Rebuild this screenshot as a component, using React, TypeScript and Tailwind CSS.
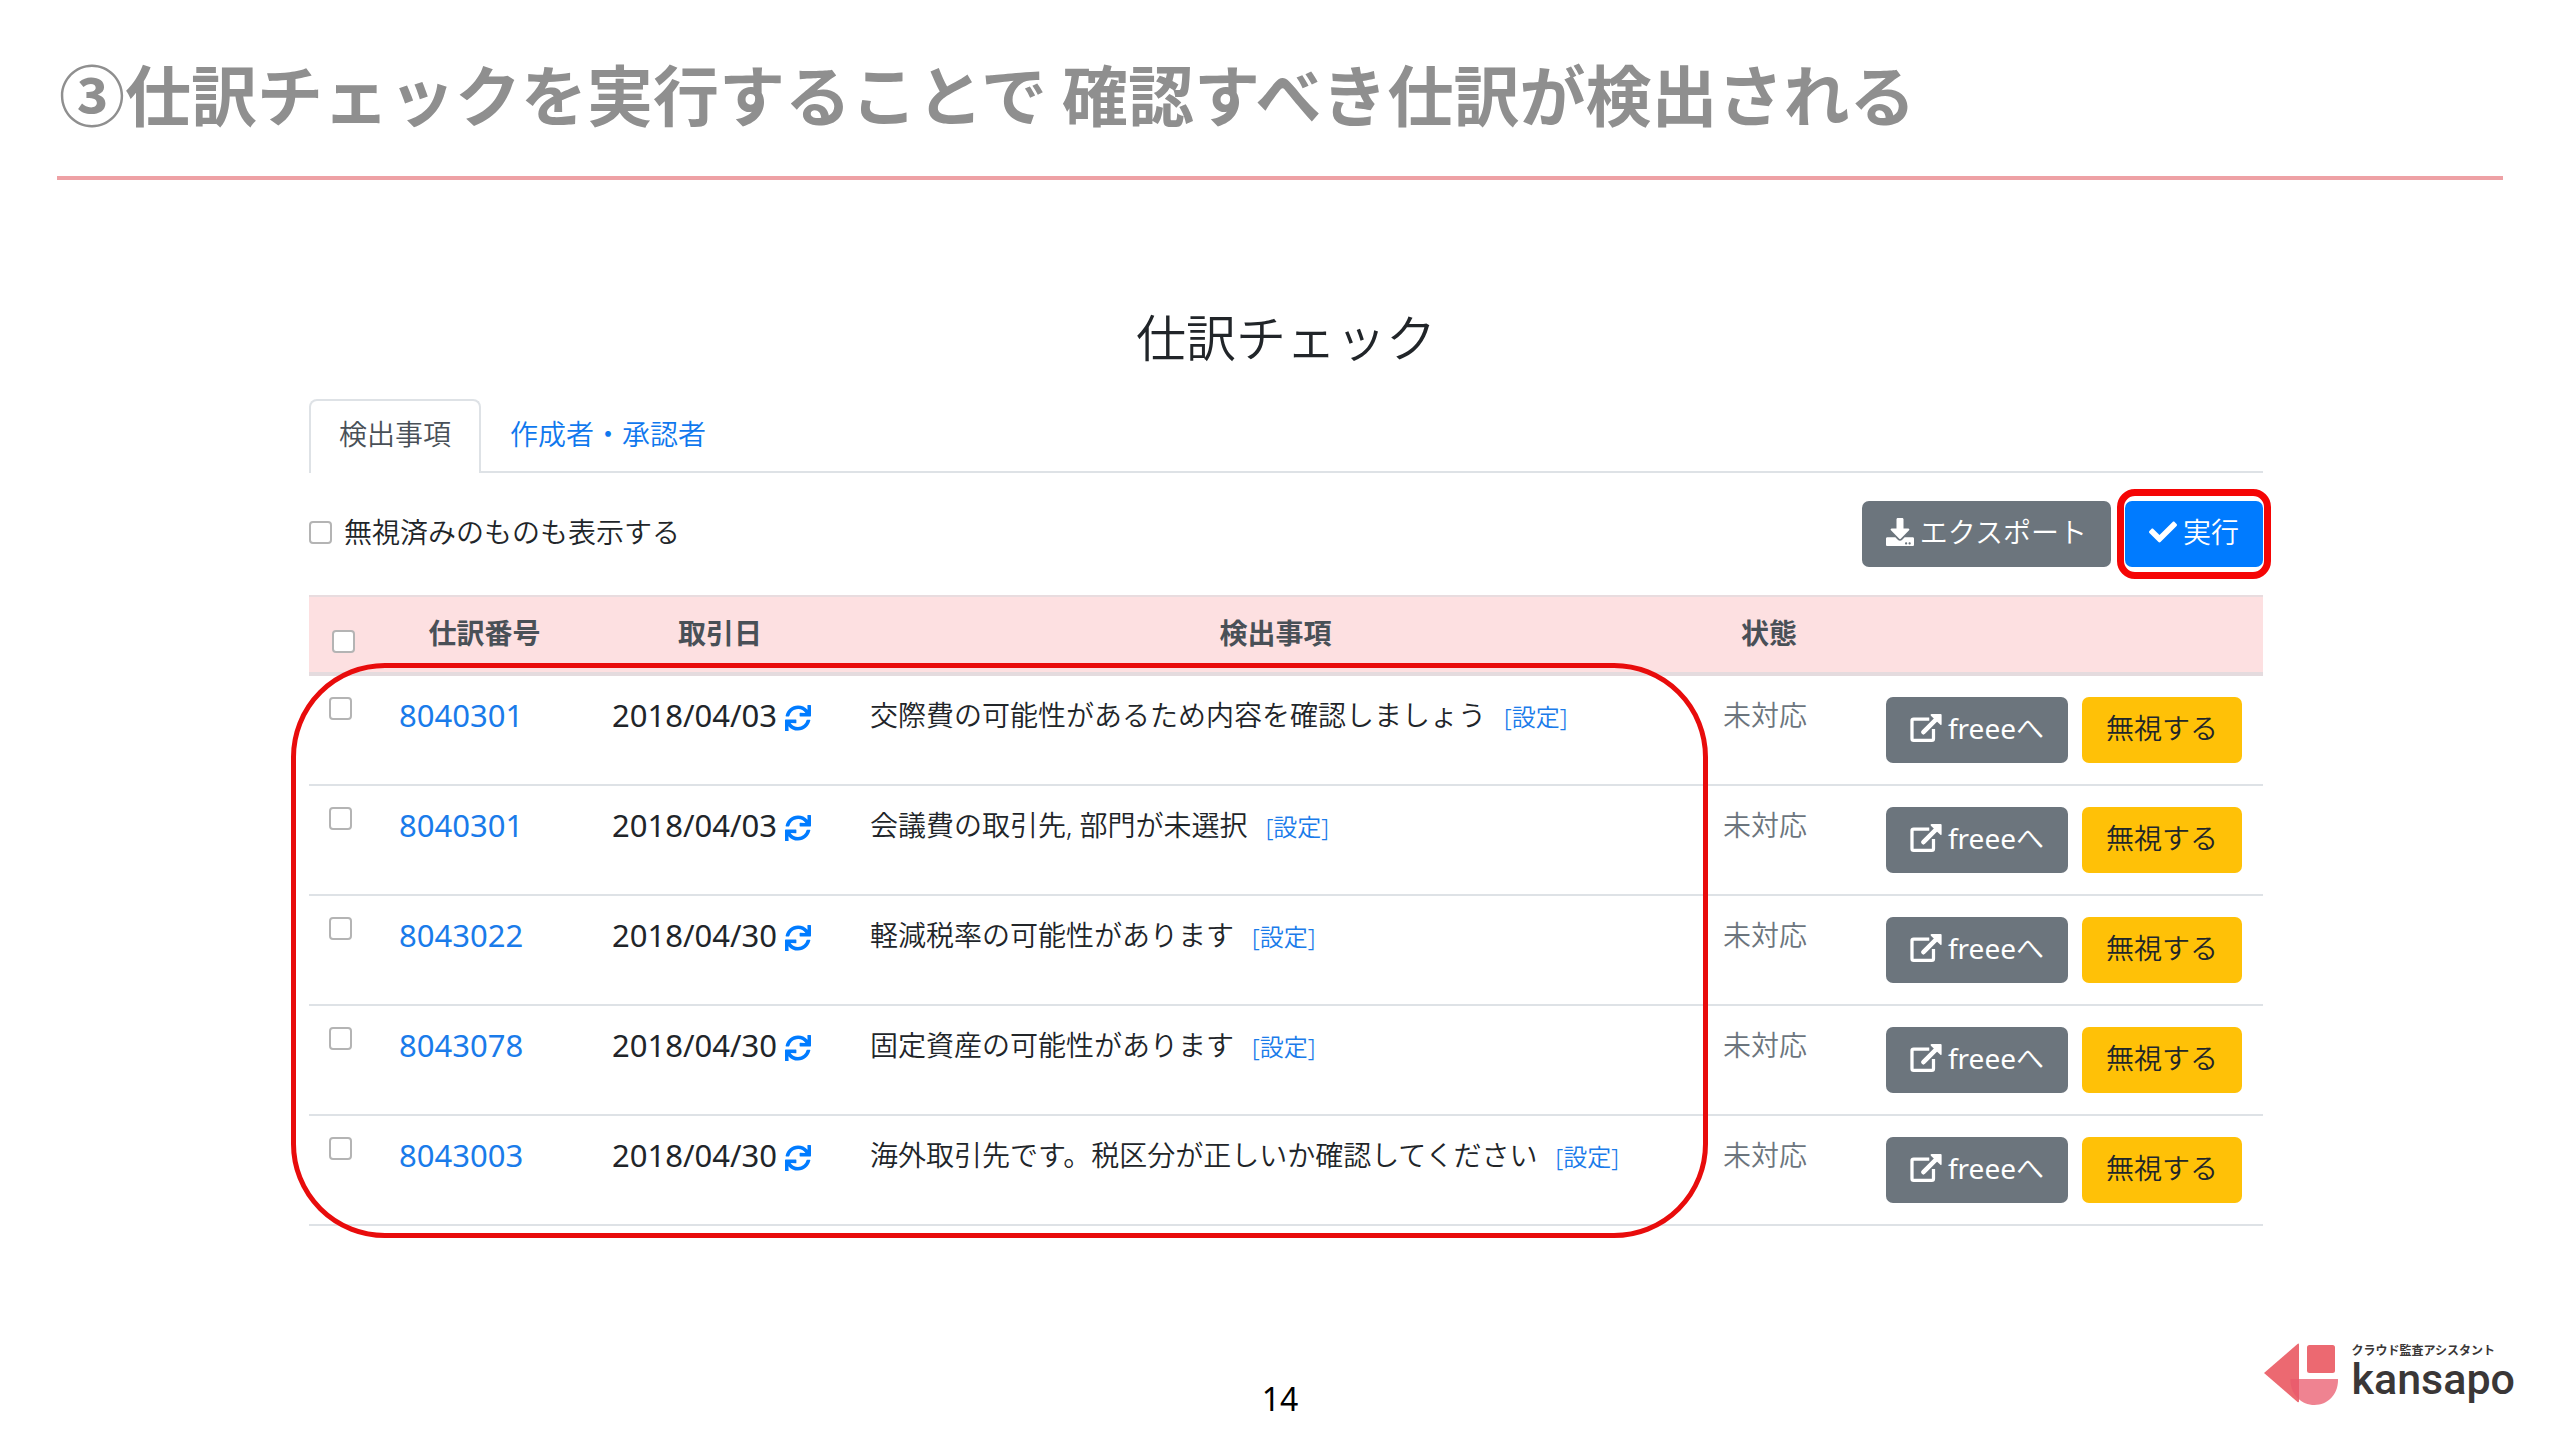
import { useState } from 'react';
import { FaCheck, FaDownload, FaSync } from 'react-icons/fa';

const rows = [
  { no: '8040301', date: '2018/04/03', text: '交際費の可能性があるため内容を確認しましょう' },
  { no: '8040301', date: '2018/04/03', text: '会議費の取引先, 部門が未選択' },
  { no: '8043022', date: '2018/04/30', text: '軽減税率の可能性があります' },
  { no: '8043078', date: '2018/04/30', text: '固定資産の可能性があります' },
  { no: '8043003', date: '2018/04/30', text: '海外取引先です。税区分が正しいか確認してください' },
];

const checkboxClass =
  'block size-[23px] shrink-0 appearance-none rounded-[4px] border-2 border-[#b4b4b4] bg-white checked:bg-[#007bff]';
const buttonClass =
  'inline-flex h-[66px] items-center gap-1.5 whitespace-nowrap rounded-[7px] px-6 pb-1 text-[28px] leading-[42px]';

function ExternalLinkIcon() {
  return (
    <svg className="h-7 w-8" viewBox="0 0 96 86" fill="none" aria-hidden="true">
      <path
        d="M58 16H10a5 5 0 0 0-5 5v55a5 5 0 0 0 5 5h56a5 5 0 0 0 5-5V46"
        stroke="currentColor"
        strokeWidth="10"
      />
      <path d="M40 56 80 16" stroke="currentColor" strokeWidth="14" strokeLinecap="round" />
      <path d="M65 0h28q3 0 3 3v28q0 5-4 2L63 5q-3-5 2-5z" fill="currentColor" />
    </svg>
  );
}

function Logo() {
  return (
    <div className="flex items-start gap-3.5 text-[#3a3737]">
      <svg className="h-[62px] w-[74px]" viewBox="0 0 74 62" aria-hidden="true">
        <path d="M0 30 33.5 1q1.5-1.2 1.5 1v56q0 2-1.5 1z" fill="#ec6971" />
        <rect x="43" y="2" width="28" height="28" rx="2.5" fill="#ec6971" />
        <path d="M26.500 36H74c.5 15-10 26-23.500 26S26 51 26.500 36z" fill="#ea5a6c" fillOpacity="0.75" />
      </svg>
      <div className="flex flex-col">
        <span className="text-[12px] leading-4 font-bold">クラウド監査アシスタント</span>
        <span className="font-['Roboto',sans-serif] text-[43px] leading-10 font-medium">kansapo</span>
      </div>
    </div>
  );
}

export default function App() {
  const [showIgnored, setShowIgnored] = useState(false);
  const [selected, setSelected] = useState<number[]>([]);

  const toggle = (index: number) => {
    setSelected(selected.includes(index) ? selected.filter((i) => i !== index) : [...selected, index]);
  };

  return (
    <div className="flex min-h-screen flex-col bg-white font-['Noto_Sans','Noto_Sans_CJK_JP',sans-serif] text-[28px] leading-[42px] font-[350] text-[#212529]">
      <header className="mx-[57px] border-b-4 border-[#eea1a5] pt-11 pb-9">
        <h1 className="pl-0.5 font-['Noto_Sans_CJK_JP',sans-serif] text-[66px] leading-[96px] font-bold text-[#8f8f8f]">
          ③仕訳チェックを実行することで 確認すべき仕訳が検出される
        </h1>
      </header>

      <main className="grow pt-[121px] pr-[297px] pl-[309px]">
        <h2 className="text-center text-[50px] leading-[74px]">仕訳チェック</h2>

        {/* Tabs */}
        <nav className="mt-6 flex border-b-2 border-[#dee2e6]">
          <a
            href="#findings"
            className="-mb-0.5 rounded-t-lg border-2 border-b-0 border-[#dee2e6] bg-white px-7 pt-3 pb-[18px] text-[#495057]"
          >
            検出事項
          </a>
          <a href="#authors" className="px-[29px] pt-3.5 pb-4 text-[#0f78ee]">
            作成者・承認者
          </a>
        </nav>

        <div className="mt-7 flex items-center justify-between">
          <label className="flex items-center gap-3 pb-1">
            <input
              type="checkbox"
              className={checkboxClass}
              checked={showIgnored}
              onChange={(e) => setShowIgnored(e.target.checked)}
            />
            無視済みのものも表示する
          </label>
          <div className="flex gap-3.5">
            <button className={`${buttonClass} bg-[#6c757d] text-white`}>
              <FaDownload className="size-7" />
              エクスポート
            </button>
            <div className="relative">
              <button className={`${buttonClass} bg-[#007bff] text-white`}>
                <FaCheck className="size-7" />
                実行
              </button>
              <div className="pointer-events-none absolute -inset-x-2 -inset-y-3 rounded-[18px] border-[7px] border-[#f50505]" />
            </div>
          </div>
        </div>

        {/* Findings */}
        <div className="relative mt-7">
          <table className="w-full table-fixed border-separate border-spacing-0">
            <colgroup>
              <col className="w-[69px]" />
              <col className="w-[213px]" />
              <col className="w-[258px]" />
              <col />
              <col className="w-[134px]" />
              <col className="w-[427px]" />
            </colgroup>
            <thead>
              <tr className="bg-[#fde0e1] text-[#495057] [&>th]:border-t-2 [&>th]:border-b-4 [&>th]:border-t-[#e8dcdf] [&>th]:border-b-[#e4dbde] [&>th]:pt-[15px] [&>th]:pb-[18px]">
                <th className="pl-[23px]">
                  <input
                    type="checkbox"
                    aria-label="すべて選択"
                    className={`${checkboxClass} mt-4`}
                    checked={selected.length === rows.length}
                    onChange={(e) => setSelected(e.target.checked ? rows.map((_, i) => i) : [])}
                  />
                </th>
                <th>仕訳番号</th>
                <th>取引日</th>
                <th>検出事項</th>
                <th>状態</th>
                <th />
              </tr>
            </thead>
            <tbody>
              {rows.map((row, index) => (
                <tr key={index} className="align-top [&>td]:border-b-2 [&>td]:border-[#dee2e6]">
                  <td className="pt-[21px] pl-5">
                    <input
                      type="checkbox"
                      aria-label={row.no}
                      className={checkboxClass}
                      checked={selected.includes(index)}
                      onChange={() => toggle(index)}
                    />
                  </td>
                  <td className="pt-[18px] pl-[21px]">
                    <a href={`#${row.no}`} className="text-[31px] font-normal text-[#1a7bea]">
                      {row.no}
                    </a>
                  </td>
                  <td className="pt-[18px] pl-[21px]">
                    <div className="flex items-center gap-2">
                      <span className="text-[31px] font-normal">{row.date}</span>
                      <FaSync className="mt-1.5 size-[26px] text-[#007bff]" />
                    </div>
                  </td>
                  <td className="pt-[18px] pl-[21px] whitespace-nowrap">
                    {row.text}
                    <a href="#settings" className="ml-[18px] text-[24px] text-[#1a7bea]">
                      [設定]
                    </a>
                  </td>
                  <td className="pt-[18px] pl-[21px] text-[#6c757d]">未対応</td>
                  <td className="pt-[21px] pr-[21px] pb-[21px]">
                    <div className="flex justify-end gap-3.5">
                      <button className={`${buttonClass} bg-[#6c757d] text-white`}>
                        <ExternalLinkIcon />
                        <span>
                          <span className="font-normal">freee</span>へ
                        </span>
                      </button>
                      <button className={`${buttonClass} bg-[#ffc107]`}>無視する</button>
                    </div>
                  </td>
                </tr>
              ))}
            </tbody>
          </table>
          {/* Highlight over the detected entries */}
          <div className="pointer-events-none absolute top-[68px] right-[555px] -bottom-3 -left-[18px] rounded-[94px] border-[5px] border-[#e80c0c]" />
        </div>
      </main>

      <footer className="grid grid-cols-[1fr_auto_1fr] items-end px-[45px] pb-[35px]">
        <span className="col-start-2 text-[32px] leading-[12px] font-normal text-black">14</span>
        <div className="justify-self-end">
          <Logo />
        </div>
      </footer>
    </div>
  );
}
